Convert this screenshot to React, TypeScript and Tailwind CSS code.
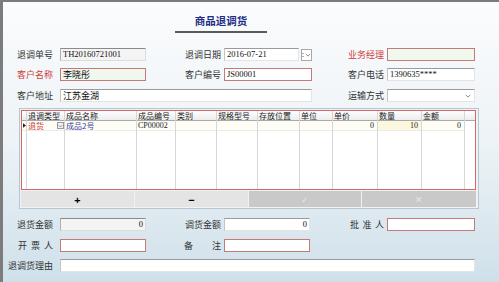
import React from 'react';

const cjk = "font-['Noto_Sans_CJK_SC',sans-serif]";
const num = "font-['Liberation_Serif',serif]";

type Kind = 'gray' | 'white' | 'red' | 'redGreen';

const kindClass: Record<Kind, string> = {
  gray: 'border border-[#dcdcdc] border-t-[#8a8a8a] border-l-[#b0b0b0] bg-[#f4f4f4]',
  white: 'border border-[#e4e4e4] border-t-[#9a9a9a] border-l-[#c4c4c4] bg-white',
  red: 'border-[1.5px] border-[#c57a7a] bg-white',
  redGreen: 'border-[1.5px] border-[#c57a7a] bg-[#f0f8ed]',
};

function Field({
  w,
  kind = 'white',
  value = '',
  right = false,
  cn = false,
  children,
}: {
  w: string;
  kind?: Kind;
  value?: string;
  right?: boolean;
  cn?: boolean;
  children?: React.ReactNode;
}) {
  return (
    <div
      className={`${w} h-[13px] flex items-center px-[2px] text-[#111] ${kindClass[kind]} ${
        right ? 'justify-end' : ''
      }`}
    >
      <span className={cn ? `${cjk} text-[9px] leading-[11px]` : `${num} text-[8.5px] leading-[11px]`}>{value}</span>
      {children}
    </div>
  );
}

function Label({ w, text, red = false, spread }: { w: string; text: string; red?: boolean; spread?: string }) {
  return (
    <div className={`${w} flex justify-end pr-[3px] ${cjk} text-[9px] leading-[12px] ${red ? 'text-[#d03a3a]' : 'text-[#333]'}`}>
      {spread ? (
        <span className={`${spread} flex justify-between`}>
          {text.split('').map((c, i) => (
            <span key={i}>{c}</span>
          ))}
        </span>
      ) : (
        text
      )}
    </div>
  );
}

function Chevron({ className = '' }: { className?: string }) {
  return (
    <svg viewBox="0 0 8 5" className={`w-[6px] h-[4px] ${className}`}>
      <path d="M1 1 L4 4 L7 1" fill="none" stroke="#666" strokeWidth="1" />
    </svg>
  );
}

const columns = [
  { title: '', w: 'w-[5px]' },
  { title: '退调类型', w: 'w-[38px]' },
  { title: '成品名称', w: 'w-[72px]' },
  { title: '成品编号', w: 'w-[39px]' },
  { title: '类别', w: 'w-[41px]' },
  { title: '规格型号', w: 'w-[41px]' },
  { title: '存放位置', w: 'w-[42px]' },
  { title: '单位', w: 'w-[33px]' },
  { title: '单价', w: 'w-[45px]' },
  { title: '数量', w: 'w-[44px]' },
  { title: '金额', w: 'w-[43px]' },
];

function DataCell({ index }: { index: number }) {
  switch (index) {
    case 0:
      return (
        <svg viewBox="0 0 4 6" className="w-[3px] h-[5px] ml-[1px]">
          <path d="M0 0 L4 3 L0 6 Z" fill="#222" />
        </svg>
      );
    case 1:
      return (
        <div className="flex w-full items-center justify-between pl-[1px]">
          <span className="text-[#d03a3a]">退货</span>
          <span className="w-[7px] h-[7px] border border-[#9a9a9a] bg-[#f0f0f0] flex items-center justify-center">
            <Chevron />
          </span>
        </div>
      );
    case 2:
      return <span className="text-[#3a3aa8] pl-[1px]">成品2号</span>;
    case 3:
      return <span className={`${num} text-[8px] pl-[1px]`}>CP00002</span>;
    case 8:
    case 10:
      return <span className={`${num} text-[8px] ml-auto pr-[3px]`}>0</span>;
    case 9:
      return <span className={`${num} text-[8px] ml-auto pr-[3px]`}>10</span>;
    default:
      return null;
  }
}

export default function App() {
  return (
    <div className="w-[499px] h-[282px] overflow-hidden border-t-2 border-l-[3px] border-[#7c7c7c] bg-gradient-to-b from-[#fbfcfd] via-[#edf3f6] to-[#cfe0ea]">
      {/* Title */}
      <div className="ml-[172px] w-[92px] pt-[5px] border-b-2 border-[#5a5a5a] text-center">
        <span className={`${cjk} text-[10.5px] font-bold leading-[12px] text-[#1f2d86]`}>商品退调货</span>
      </div>

      {/* Header form */}
      <div className="mt-[15px] flex items-center">
        <Label w="w-[53px]" text="退调单号" />
        <div className="w-[4px]" />
        <Field w="w-[86px]" kind="gray" value="TH20160721001" />
        <Label w="w-[78px]" text="退调日期" />
        <Field w="w-[75px]" kind="white" value="2016-07-21" />
        <div className="ml-[2px] w-[11px] h-[12px] border border-[#a8a8a8] bg-white flex items-center justify-center gap-[1px]">
          <span className="text-[7px] leading-none text-[#333]">:</span>
          <Chevron />
        </div>
        <Label w="w-[75px]" text="业务经理" red />
        <Field w="w-[88px]" kind="redGreen" />
      </div>

      <div className="mt-[7px] flex items-center">
        <Label w="w-[53px]" text="客户名称" red />
        <div className="w-[4px]" />
        <Field w="w-[86px]" kind="redGreen" value="李晓彤" cn />
        <Label w="w-[78px]" text="客户编号" />
        <Field w="w-[88px]" kind="red" value="JS00001" />
        <Label w="w-[75px]" text="客户电话" />
        <Field w="w-[88px]" kind="white" value="1390635****" />
      </div>

      <div className="mt-[8px] flex items-center">
        <Label w="w-[53px]" text="客户地址" />
        <div className="w-[4px]" />
        <Field w="w-[252px]" kind="white" value="江苏金湖" cn />
        <Label w="w-[75px]" text="运输方式" />
        <Field w="w-[88px]" kind="white">
          <Chevron className="ml-auto mr-[1px]" />
        </Field>
      </div>

      {/* Grid */}
      <div className="mt-[6px] ml-[16px] w-[460px] border border-[#b9c6d2] pl-[1px] pr-[2px] pt-[1px] pb-[1px] bg-[#eef3f6]">
        <div className={`h-[80px] border border-[#d26767] bg-white flex ${cjk} text-[8px] leading-[9px] text-[#222]`}>
          {columns.map((c, i) => (
            <div key={i} className={`${c.w} flex flex-col border-r border-[#d6d6d6]`}>
              <div className="h-[10px] flex items-center pl-[1px] bg-gradient-to-b from-white to-[#ececec] border-b border-[#a9a9a9] text-[#222] whitespace-nowrap overflow-hidden">
                {c.title}
              </div>
              <div
                className={`h-[10px] flex items-center whitespace-nowrap overflow-hidden border-b border-[#ebebeb] ${
                  i === 9 ? 'bg-[#fcf8df]' : 'bg-[#fdfdf6]'
                }`}
              >
                <DataCell index={i} />
              </div>
              <div className="flex-1" />
            </div>
          ))}
          <div className="flex-1 flex flex-col">
            <div className="h-[10px] bg-gradient-to-b from-white to-[#ececec] border-b border-[#a9a9a9]" />
          </div>
        </div>

        <div className="mt-[1px] h-[16px] flex gap-[1px]">
          <button className="w-[113px] bg-[#e4e4e4] flex items-center justify-center text-[11px] font-bold leading-none text-black">
            +
          </button>
          <button className="w-[113px] bg-[#e4e4e4] flex items-center justify-center text-[11px] font-bold leading-none text-black">
            −
          </button>
          <button className="w-[112px] bg-[#c9c9c9] flex items-center justify-center text-[9px] leading-none text-[#e6e6e6]">
            ✓
          </button>
          <button className="flex-1 bg-[#c9c9c9] flex items-center justify-center text-[9px] leading-none text-[#e6e6e6]">
            ✕
          </button>
        </div>
      </div>

      {/* Footer form */}
      <div className="mt-[9px] flex items-center">
        <Label w="w-[53px]" text="退货金额" />
        <div className="w-[4px]" />
        <Field w="w-[86px]" kind="gray" value="0" right />
        <Label w="w-[78px]" text="调货金额" />
        <Field w="w-[86px]" kind="white" value="0" right />
        <Label w="w-[77px]" text="批准人" spread="w-[34px]" />
        <Field w="w-[88px]" kind="red" />
      </div>

      <div className="mt-[8px] flex items-center">
        <Label w="w-[53px]" text="开票人" spread="w-[35px]" />
        <div className="w-[4px]" />
        <Field w="w-[86px]" kind="red" />
        <Label w="w-[78px]" text="备注" spread="w-[37px]" />
        <Field w="w-[86px]" kind="red" />
      </div>

      <div className="mt-[7px] flex items-center">
        <Label w="w-[53px]" text="退调货理由" />
        <div className="w-[4px]" />
        <Field w="w-[415px]" kind="white" />
      </div>
    </div>
  );
}
